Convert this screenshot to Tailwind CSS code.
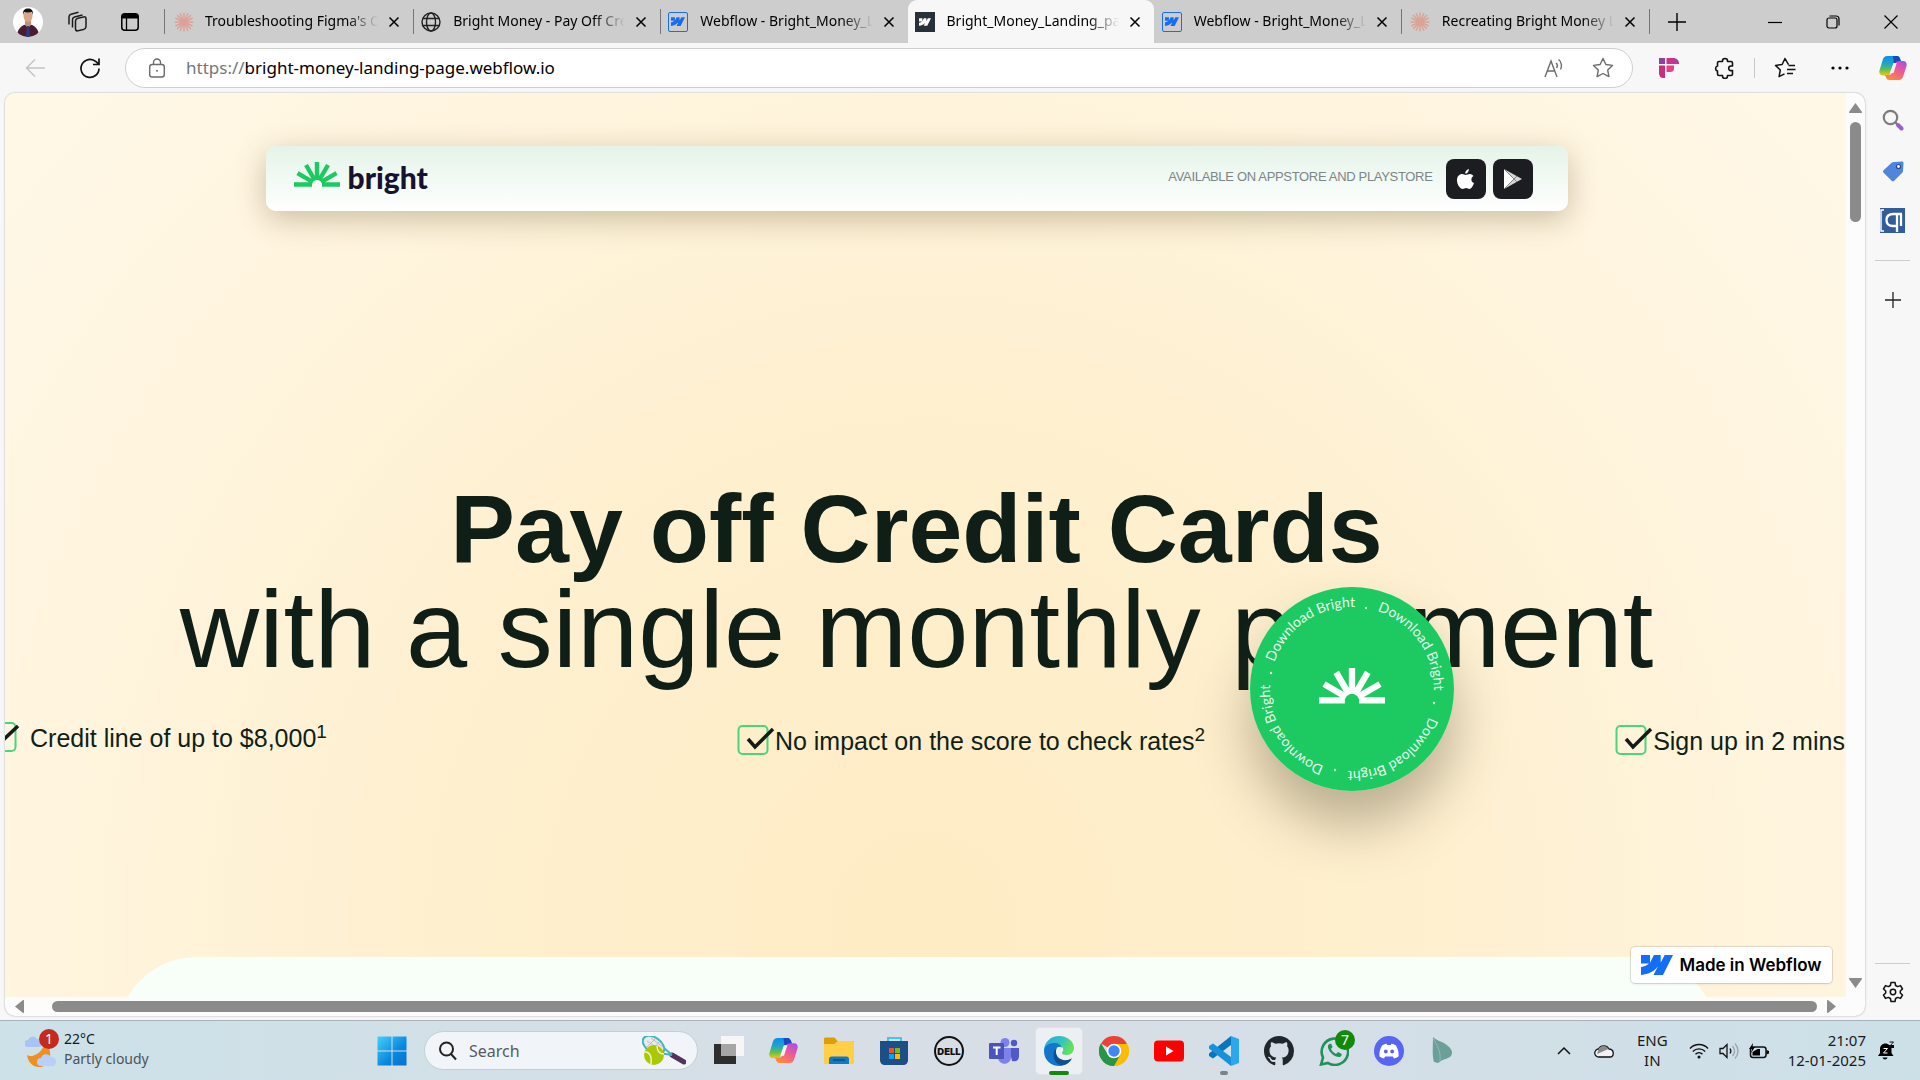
<!DOCTYPE html>
<html lang="en">
<head>
<meta charset="utf-8">
<title>Bright_Money_Landing_page</title>
<script src="https://cdn.jsdelivr.net/npm/@tailwindcss/browser@4"></script>
</head>
<body class="flex h-screen flex-col overflow-hidden bg-[#f7f7f7] font-['Noto_Sans',sans-serif] text-[#1a1a1a]">

<!-- shared symbols -->
<svg class="absolute size-0" aria-hidden="true">
  <symbol id="x" viewBox="0 0 12 12"><path d="M1.5 1.5l9 9M10.5 1.5l-9 9" stroke="currentColor" stroke-width="1.5" fill="none"/></symbol>
  <symbol id="burst" viewBox="0 0 20 20"><g stroke="#dca295" stroke-width="1.500" stroke-linecap="round"><path d="M10 1v18M1 10h18M3.5 3.5l13 13M16.500 3.500l-13 13M6.300 1.800l7.400 16.400M13.700 1.800L6.300 18.200M1.800 6.300l16.400 7.400M1.800 13.700l16.400-7.400"/></g></symbol>
  <symbol id="wf" viewBox="0 0 32 20"><path d="M32 0L22 20h-9.500l4.200-8.200h-.2C13 16.400 7.900 19.400 0 20v-8.100s5-.3 8-3.400H0V0h9v7.400h.2L12.900 0h6.800v7.300h.2L23.700 0z"/></symbol>
  <symbol id="sun" viewBox="0 0 46 25"><g stroke="currentColor" stroke-width="4.400" fill="none"><path d="M0 22.500h18M28 22.500h18M19 20.200L3.500 11.200M21 18.500L12 3M23 18V0M25 18.500L34 3M27 20.200l15.500-9"/></g></symbol>
  <symbol id="copilot" viewBox="0 0 30 28">
    <path d="M9 1h10c2.500 0 3.300 1.800 4 4l1 3h-5c-2.500 0-3.500 1.500-4.300 4l-2 6.500C12 21 10.500 22 8 22H4c-3 0-4.300-2.500-3.500-5.500L4 5c.8-2.600 2.200-4 5-4z" fill="url(#cpA)"/>
    <path d="M15 1h4c2.500 0 3.300 1.800 4 4l1 2.500h-3c-3 0-4 1-4.800 3.500z" fill="#1b46c4"/>
    <path d="M21 27H11c-2.500 0-3.300-1.800-4-4l-1-1.500h4c2.500 0 4-1.500 4.800-4l2.500-7.500C18.100 7.500 19.500 6.500 22 6.500h4c3 0 4.300 2.500 3.500 5.500L26 23c-.8 2.600-2.200 4-5 4z" fill="url(#cpB)"/>
    <path d="M15.500 8.500h3.500l-3.500 11h-4z" fill="#f6f2f4"/>
  </symbol>
  <defs>
    <linearGradient id="cpA" x1="0" y1="0" x2="0" y2="1"><stop offset="0" stop-color="#0a8df0"/><stop offset=".4" stop-color="#1ea6c8"/><stop offset=".7" stop-color="#5dc04f"/><stop offset="1" stop-color="#f5c518"/></linearGradient>
    <linearGradient id="cpB" x1="1" y1="0" x2="0.300" y2="1"><stop offset="0" stop-color="#a04df0"/><stop offset=".5" stop-color="#ee5a96"/><stop offset="1" stop-color="#ff8a3c"/></linearGradient>
  </defs>
</svg>

<!-- tab strip -->
<header class="flex h-[43px] shrink-0 items-center bg-[#cdcdcd] text-black">
  <div class="flex w-[164px] shrink-0 items-center pl-[13px]">
    <button aria-label="Profile" class="size-[30px] overflow-hidden rounded-full bg-white">
      <svg viewBox="0 0 30 30"><path d="M4 30c0-8 4-12 11-13 7 1 11 5 11 13z" fill="#4a1c34"/><path d="M12 13h6v5l-3 3-3-3z" fill="#c98f74"/><ellipse cx="15" cy="9" rx="4.500" ry="6" fill="#d9a58b"/><path d="M10 8c-.5-5 2-6.500 5-6.500S20.500 3 20 8l-1-3c-3 .5-6 .500-8 0z" fill="#171215"/><path d="M14 19h2l1 11h-4z" fill="#2b3d7a"/></svg>
    </button>
    <button aria-label="Workspaces" class="ml-[24px] size-[21px]"><svg viewBox="0 0 21 21" fill="none" stroke="#1a1a1a" stroke-width="1.500"><rect x="8.500" y="6.500" width="10.500" height="12.500" rx="2.500" transform="skewY(-14)" style="transform-origin:14px 12px"/><path d="M5.500 16.500V8.500c0-1.400.8-2.300 2-2.600l8-2"/><path d="M2 13.500V5.700c0-1.400.7-2.100 2-2.500l7.500-2"/></svg></button>
    <button aria-label="Tab actions" class="ml-[33px] size-[18px]"><svg viewBox="0 0 18 18"><rect x=".8" y=".8" width="16.400" height="16.400" rx="3" fill="none" stroke="#000" stroke-width="1.500"/><path d="M.5 5.500V3.500a3 3 0 013-3h11a3 3 0 013 3v2z"/><path d="M5.500 5v12.500" stroke="#000" stroke-width="1.300"/></svg></button>
  </div>
  <nav class="flex h-full min-w-0 max-w-[1486px] flex-1 items-center text-sm leading-5" aria-label="Tabs">
    <div class="flex h-[25px] min-w-0 flex-1 items-center border-l border-[#757575] pl-[9px] pr-[13px]"><svg class="size-[20px] shrink-0"><use href="#burst"/></svg><a href="#" class="ml-[11px] min-w-0 flex-1 overflow-hidden whitespace-nowrap pb-[2px] [mask-image:linear-gradient(to_right,#000_82%,transparent)]">Troubleshooting Figma's Co</a><button aria-label="Close tab" class="ml-[10px] size-[12px] shrink-0"><svg class="size-[12px]"><use href="#x"/></svg></button></div>
    <div class="flex h-[25px] min-w-0 flex-1 items-center border-l border-[#757575] pl-[7px] pr-[13px]"><svg class="size-[20px] shrink-0" viewBox="0 0 20 20" fill="none" stroke="#222" stroke-width="1.400"><circle cx="10" cy="10" r="9"/><ellipse cx="10" cy="10" rx="4.500" ry="9"/><path d="M1.800 6.500h16.400M1.800 13.500h16.400"/></svg><a href="#" class="ml-[12px] min-w-0 flex-1 overflow-hidden whitespace-nowrap pb-[2px] [mask-image:linear-gradient(to_right,#000_82%,transparent)]">Bright Money - Pay Off Credit</a><button aria-label="Close tab" class="ml-[10px] size-[12px] shrink-0"><svg class="size-[12px]"><use href="#x"/></svg></button></div>
    <div class="flex h-[25px] min-w-0 flex-1 items-center border-l border-[#757575] pl-[7px] pr-[13px]"><span class="flex size-[20px] shrink-0 items-center justify-center rounded-xs border border-[#146ef5]"><svg class="h-[9px] w-[14px] fill-[#146ef5]"><use href="#wf"/></svg></span><a href="#" class="ml-[12px] min-w-0 flex-1 overflow-hidden whitespace-nowrap pb-[2px] [mask-image:linear-gradient(to_right,#000_82%,transparent)]">Webflow - Bright_Money_La</a><button aria-label="Close tab" class="ml-[10px] size-[12px] shrink-0"><svg class="size-[12px]"><use href="#x"/></svg></button></div>
    <div class="flex h-full min-w-0 flex-1 items-center rounded-t-[9px] bg-[#f7f7f7] pl-[7px] pr-[13px]"><span class="flex size-[20px] shrink-0 items-center justify-center bg-[#28303a]"><svg class="h-[8px] w-[12px] fill-white"><use href="#wf"/></svg></span><a href="#" aria-current="page" class="ml-[12px] min-w-0 flex-1 overflow-hidden whitespace-nowrap pb-[2px] [mask-image:linear-gradient(to_right,#000_82%,transparent)]">Bright_Money_Landing_page</a><button aria-label="Close tab" class="ml-[10px] size-[12px] shrink-0"><svg class="size-[12px]"><use href="#x"/></svg></button></div>
    <div class="flex h-[25px] min-w-0 flex-1 items-center pl-[8px] pr-[13px]"><span class="flex size-[20px] shrink-0 items-center justify-center rounded-xs border border-[#146ef5]"><svg class="h-[9px] w-[14px] fill-[#146ef5]"><use href="#wf"/></svg></span><a href="#" class="ml-[12px] min-w-0 flex-1 overflow-hidden whitespace-nowrap pb-[2px] [mask-image:linear-gradient(to_right,#000_82%,transparent)]">Webflow - Bright_Money_La</a><button aria-label="Close tab" class="ml-[10px] size-[12px] shrink-0"><svg class="size-[12px]"><use href="#x"/></svg></button></div>
    <div class="flex h-[25px] min-w-0 flex-1 items-center border-x border-[#757575] pl-[8px] pr-[13px]"><svg class="size-[20px] shrink-0"><use href="#burst"/></svg><a href="#" class="ml-[12px] min-w-0 flex-1 overflow-hidden whitespace-nowrap pb-[2px] [mask-image:linear-gradient(to_right,#000_82%,transparent)]">Recreating Bright Money La</a><button aria-label="Close tab" class="ml-[10px] size-[12px] shrink-0"><svg class="size-[12px]"><use href="#x"/></svg></button></div>
  </nav>
  <button aria-label="New tab" class="ml-[18px] size-[18px] shrink-0"><svg viewBox="0 0 18 18" stroke="#000" stroke-width="1.400"><path d="M9 0v18M0 9h18"/></svg></button>
  <div class="ml-auto flex items-center gap-[44px] pr-[22px]">
    <button aria-label="Minimize" class="size-[14px]"><svg viewBox="0 0 14 14" stroke="#000" stroke-width="1.200"><path d="M0 7.500h14"/></svg></button>
    <button aria-label="Restore" class="size-[14px]"><svg viewBox="0 0 14 14" stroke="#000" stroke-width="1.200" fill="none"><rect x="1" y="3" width="10" height="10" rx="2"/><path d="M3.500 1h6.500a3 3 0 013 3v6.500"/></svg></button>
    <button aria-label="Close" class="size-[14px]"><svg viewBox="0 0 14 14" stroke="#000" stroke-width="1.200"><path d="M.5.5l13 13M13.500.5l-13 13"/></svg></button>
  </div>
</header>

<!-- toolbar -->
<div class="flex h-[50px] shrink-0 items-center">
  <button aria-label="Back" class="ml-[25px] size-[20px]"><svg viewBox="0 0 20 20" fill="none" stroke="#c4c4c4" stroke-width="1.500"><path d="M10 1.500L1.500 10l8.500 8.500M1.500 10H20"/></svg></button>
  <button aria-label="Refresh" class="ml-[34px] size-[22px]"><svg viewBox="0 0 22 22" fill="none" stroke="#111" stroke-width="1.700"><path d="M20 11.500a9 9 0 11-3-6.800l2.500 2.200M20 1.500v6h-6"/></svg></button>
  <div class="ml-[24px] flex h-[40px] min-w-0 flex-1 items-center rounded-full border border-[#cfcfcf] bg-white">
    <svg class="ml-[21px] size-[20px] shrink-0" viewBox="0 0 20 20" fill="none" stroke="#6b6b6b" stroke-width="1.400"><rect x="2.700" y="6.500" width="14.600" height="12.500" rx="2.500"/><path d="M6.500 6.500V4.500a3.500 3.500 0 017 0v2"/><circle cx="10" cy="12.800" r="1" fill="#6b6b6b" stroke="none"/></svg>
    <label for="url" class="ml-[19px] text-[17px] leading-6 text-[#767676]">https://</label><input id="url" value="bright-money-landing-page.webflow.io" class="min-w-0 flex-1 bg-transparent text-[17px] leading-6 text-black outline-none">
    <button aria-label="Read aloud" class="size-[20px]"><svg viewBox="0 0 20 20" fill="none" stroke="#6b6b6b" stroke-width="1.400"><path d="M1 19L7 3l6 16M3.200 13h7.600M12 5c1.500 1.300 1.500 3.500.5 5M14.500 1.500c3.500 2.500 3.500 7 2 10"/></svg></button>
    <button aria-label="Add to favorites" class="ml-[28px] mr-[18px] size-[22px]"><svg viewBox="0 0 22 22" fill="none" stroke="#6b6b6b" stroke-width="1.400" stroke-linejoin="round"><path d="M11 1.500l2.900 6 6.600.9-4.800 4.600 1.200 6.600L11 16.500l-5.900 3.100L6.300 13 1.500 8.400l6.600-.9z"/></svg></button>
  </div>
  <button aria-label="Extension" class="ml-[26px] size-[20px]"><svg viewBox="0 0 20 20"><path d="M0 0h6v6H0z" fill="#8e3fa0"/><path d="M7.500 0H14c4 0 6 2.500 6 6H7.500z" fill="#c63390"/><path d="M0 7.500h6V20H4.500C1.500 20 0 18 0 15z" fill="#c2307e"/><path d="M7.500 7.500h7.500V10c0 2.500-1 4-4 4H7.500z" fill="#e93f82"/></svg></button>
  <button aria-label="Extensions" class="ml-[35px] size-[22px]"><svg viewBox="0 0 22 22" fill="none" stroke="#111" stroke-width="1.600" stroke-linejoin="round"><path d="M5 4.500h3.500V4a2.500 2.500 0 015 0v.5H17a1.500 1.500 0 011.500 1.500v3H17a2.300 2.300 0 000 4.600h1.500V17a1.500 1.500 0 01-1.500 1.500h-3.500V19a2.500 2.500 0 01-5 0v-.5H5A1.500 1.500 0 013.500 17v-3a2.600 2.600 0 010-5V6A1.500 1.500 0 015 4.500z"/></svg></button>
  <span class="ml-[18px] h-[20px] w-px bg-[#c8c8c8]"></span>
  <button aria-label="Favorites" class="ml-[19px] size-[22px]"><svg viewBox="0 0 22 22" fill="none" stroke="#111" stroke-width="1.500" stroke-linejoin="round"><path d="M14.500 7.600l-3.500-6.100-2.900 6-6.600.9L6.300 13l-1.200 6.600 5.400-2.800M14.500 8.500H21M13 12.500h8.500M13 16.500h6"/></svg></button>
  <button aria-label="More" class="ml-[34px] size-[20px]"><svg viewBox="0 0 20 20"><circle cx="3" cy="10" r="1.600"/><circle cx="10" cy="10" r="1.600"/><circle cx="17" cy="10" r="1.600"/></svg></button>
  <button aria-label="Copilot" class="ml-[29px] mr-[13px] h-[26px] w-[28px]"><svg class="h-[26px] w-[28px]"><use href="#copilot"/></svg></button>
</div>

<div class="flex min-h-0 flex-1 pb-[4px]">
  <!-- web page -->
  <main class="ml-[5px] flex min-w-0 flex-1 flex-col overflow-hidden rounded-[10px] bg-[#fcfcfc] shadow-[0_0_2px_rgba(0,0,0,0.35)]">
    <div class="flex min-h-0 flex-1">
      <div class="relative min-w-0 flex-1 overflow-hidden bg-[radial-gradient(ellipse_58%_120%_at_50%_92%,#feecc4_0%,#fef0d0_50%,#fff5df_85%,#fff8e7_110%)] font-['Liberation_Sans',Arial,sans-serif] text-[#0f1f17]">
        <div class="flex h-full flex-col pr-[18px]">
          <header class="mx-auto mt-[53px] flex h-[65px] w-[1302px] max-w-full shrink-0 items-center rounded-[10px] bg-linear-to-b from-[#e4f4e8] to-white pl-[28px] pr-[35px] shadow-[0_8px_30px_rgba(80,60,20,0.3)]">
            <a href="#" class="flex items-center gap-[8px] pb-[4px] text-[#1dca62]" aria-label="bright"><svg class="mb-[4px] h-[25px] w-[46px]"><use href="#sun"/></svg><span class="font-['Lato',sans-serif] text-[30px] font-black leading-8 text-[#15132f]">bright</span></a>
            <span class="ml-auto pb-[3px] text-[13px] leading-5 tracking-tight text-[#7c8588]">AVAILABLE ON APPSTORE AND PLAYSTORE</span>
            <button aria-label="App Store" class="ml-[13px] flex size-[40px] items-center justify-center rounded-lg bg-[#1c1d21]"><svg class="h-[20px] w-[17px]" viewBox="0 0 17 20" fill="#fff"><path d="M11.800 0c.2 1.500-.4 2.600-1.100 3.400-.7.800-1.600 1.300-2.500 1.200C8 3.300 8.600 2.200 9.400 1.400 10.100.6 11 .2 11.800 0zM16.500 7c-1.500.9-2.100 2-2.100 3.400 0 1.700 1 2.900 2.600 3.500-.8 2.500-2.700 6-4.600 6-1.300 0-1.900-.8-3.300-.8-1.500 0-2.100.8-3.300.8C3 19.900 0 15.500 0 11.200 0 7.300 2.500 5 5.100 5c1.500 0 2.600.9 3.600.9 1.100 0 2.300-1 4-1 1.500 0 2.900.7 3.800 2.100z"/></svg></button>
            <button aria-label="Play Store" class="ml-[7px] flex size-[40px] items-center justify-center rounded-lg bg-[#1c1d21]"><svg class="h-[20px] w-[18px]" viewBox="0 0 18 20"><path d="M0 0l18 10L0 20z" fill="#d6d6d6"/><path d="M0 0l9.500 10L0 20z" fill="#fff"/><path d="M0 0l13 13M0 20L13 7" stroke="#7c7c7c" stroke-width=".9"/></svg></button>
          </header>
          <h1 class="mt-[268px] shrink-0 whitespace-nowrap text-center"><span class="flex justify-center text-[97px] font-bold leading-[100px]">Pay off Credit Cards</span><span class="flex justify-center text-[110px] leading-[100px]">with a single monthly payment</span></h1>
          <ul class="-ml-[22px] mt-[41px] flex shrink-0 items-start gap-[410px] whitespace-nowrap text-[25px] leading-[36px] text-[#0f1f17]">
            <li class="flex shrink-0 gap-[8px]"><svg class="mt-[1px] h-[32px] w-[39px]" viewBox="0 0 39 32" fill="none"><rect x="4.500" y="2" width="28" height="28" rx="4" stroke="#48d67c" stroke-width="2"/><path d="M11 16l6 6L35 5" stroke="#151c18" stroke-width="3.500"/></svg><span>Credit line of up to $8,000<sup class="text-[19px]">1</sup></span></li>
            <li class="flex shrink-0 pt-[3px]"><svg class="mt-[1px] h-[32px] w-[38px]" viewBox="0 0 38 32" fill="none"><rect x="1.500" y="2" width="29" height="28" rx="4" stroke="#48d67c" stroke-width="2"/><path d="M11 15l7 8L36 5" stroke="#151c18" stroke-width="3.500"/></svg><span>No impact on the score to check rates<sup class="text-[19px]">2</sup></span></li>
            <li class="flex shrink-0 pt-[3px]"><svg class="mt-[1px] h-[32px] w-[38px]" viewBox="0 0 38 32" fill="none"><rect x="1.500" y="2" width="29" height="28" rx="4" stroke="#48d67c" stroke-width="2"/><path d="M11 15l7 8L36 5" stroke="#151c18" stroke-width="3.500"/></svg><span>Sign up in 2 mins</span></li>
          </ul>
          <section class="mx-auto mt-auto h-[40px] w-[1600px] shrink-0 overflow-hidden"><div class="h-[160px] rounded-[80px] bg-[#f7fff8]"></div></section>
        </div>
        <!-- download badge floating over the hero -->
        <a href="#" aria-label="Download Bright" class="absolute left-[1245px] top-[494px] size-[204px] rounded-full shadow-[0_34px_54px_rgba(70,60,40,0.36)]">
          <svg viewBox="0 0 204 204" class="size-[204px]">
            <defs><path id="ring" d="M102 20a82 82 0 010 164a82 82 0 010-164"/></defs>
            <circle cx="102" cy="102" r="102" fill="#1dca62"/>
            <g fill="#e6fbee" font-family="Lato, sans-serif" font-size="14">
              <text transform="rotate(18 102 102)"><textPath href="#ring">Download Bright</textPath></text>
              <text transform="rotate(110 102 102)"><textPath href="#ring">Download Bright</textPath></text>
              <text transform="rotate(200 102 102)"><textPath href="#ring">Download Bright</textPath></text>
              <text transform="rotate(289 102 102)"><textPath href="#ring">Download Bright</textPath></text>
              <circle cx="116" cy="21" r="1.200"/><circle cx="184" cy="116" r="1.200"/><circle cx="85" cy="183" r="1.200"/><circle cx="21" cy="86" r="1.200"/>
            </g>
            <svg x="69" y="81" width="66" height="36" class="text-white"><use href="#sun"/></svg>
          </svg>
        </a>
        <a href="#" class="absolute bottom-[14px] right-[14px] flex h-[36px] w-[201px] items-center justify-center gap-[6px] rounded-[4px] bg-white font-['Inter',sans-serif] text-[17px] font-semibold leading-5 text-black shadow-[0_0_0_1px_rgba(0,0,0,0.1),0_1px_3px_rgba(0,0,0,0.1)]"><svg class="h-[20px] w-[32px] fill-[#146ef5]"><use href="#wf"/></svg><span class="whitespace-nowrap">Made in Webflow</span></a>
      </div>
      <div class="flex w-[19px] shrink-0 flex-col items-center pb-[9px] pt-[10px]" aria-hidden="true">
        <svg class="h-[10px] w-[13px] fill-[#8b8b8b]" viewBox="0 0 13 10"><path d="M6.500 0L13 9c0 .600-.4 1-1 1H1c-.6 0-1-.4-1-1z"/></svg>
        <span class="mt-[9px] h-[100px] w-[11px] rounded-full bg-[#8b8b8b]"></span>
        <svg class="mt-auto h-[10px] w-[13px] fill-[#8b8b8b]" viewBox="0 0 13 10"><path d="M6.500 10L0 1c0-.600.4-1 1-1h11c.6 0 1 .4 1 1z"/></svg>
      </div>
    </div>
    <div class="flex h-[19px] shrink-0 items-center pl-[10px] pr-[29px]" aria-hidden="true">
      <svg class="h-[13px] w-[9px] fill-[#8b8b8b]" viewBox="0 0 9 13"><path d="M0 6.500L8 0c.6 0 1 .4 1 1v11c0 .600-.4 1-1 1z"/></svg>
      <span class="ml-[28px] mr-[10px] h-[11px] flex-1 rounded-full bg-[#8b8b8b]"></span>
      <svg class="h-[13px] w-[9px] fill-[#8b8b8b]" viewBox="0 0 9 13"><path d="M9 6.500L1 13c-.6 0-1-.4-1-1V1c0-.600.4-1 1-1z"/></svg>
    </div>
  </main>
  <!-- side bar -->
  <aside class="flex w-[55px] shrink-0 flex-col items-center pb-[13px] pt-[16px]">
    <button aria-label="Search" class="size-[22px]"><svg viewBox="0 0 22 22" fill="none"><circle cx="8.500" cy="8.500" r="6.700" stroke="#7d7d7d" stroke-width="2.200"/><path d="M13.500 13.500l2 2" stroke="#777" stroke-width="2"/><path d="M16 16l3.500 3.500" stroke="#9a5fd0" stroke-width="4" stroke-linecap="round"/></svg></button>
    <button aria-label="Shopping" class="mt-[29px] size-[22px]"><svg viewBox="0 0 22 22"><path d="M12 2l8-.5c1 0 1.500.5 1.500 1.500L21 11c0 .7-.3 1.200-.8 1.700l-8 8c-.8.800-1.800.800-2.600 0l-8-8c-.8-.8-.8-1.700 0-2.500l8-7.400C10.500 2.200 11.200 2 12 2z" fill="#4f86dc"/><circle cx="16.500" cy="6.500" r="2" fill="#fff" stroke="#234a9c" stroke-width="1.200"/></svg></button>
    <button aria-label="Reader" class="mt-[26px] size-[25px] bg-[#325d9b]"><svg viewBox="0 0 25 25" fill="none" stroke="#fff"><path d="M22 6h-8.500c-5.500 0-7 3-7 6s1.500 6 6.500 6h3M17 6v18M21 6v12" stroke-width="2.300"/><path d="M4 2H1v21h3" stroke-width="1.500"/></svg></button>
    <span class="mt-[27px] h-px w-[35px] bg-[#cdcdcd]"></span>
    <button aria-label="Customize" class="mt-[31px] size-[16px]"><svg viewBox="0 0 16 16" stroke="#222" stroke-width="1.300"><path d="M8 0v16M0 8h16"/></svg></button>
    <span class="mt-auto h-px w-[35px] bg-[#cdcdcd]"></span>
    <button aria-label="Settings" class="mt-[17px] size-[22px]"><svg viewBox="0 0 22 22" fill="none" stroke="#111" stroke-width="1.500" stroke-linejoin="round"><path d="M9 1.500h4l.6 3 2 1.100 2.900-1 2 3.400-2.200 2v2l2.200 2-2 3.400-2.900-1-2 1.100-.6 3H9l-.6-3-2-1.100-2.900 1-2-3.400 2.200-2v-2l-2.200-2 2-3.400 2.900 1 2-1.100z"/><circle cx="11" cy="11" r="2.700"/></svg></button>
  </aside>
</div>

<!-- taskbar -->
<footer class="flex h-[60px] shrink-0 items-center border-t border-[#a7b3b9] bg-linear-to-r from-[#cce1e8] via-[#d9dee6] via-[52%] to-[#cce0e8] text-[15px]">
  <div class="flex w-[377px] shrink-0 items-center pl-[25px]">
    <div class="relative h-[36px] w-[32px]"><svg viewBox="0 0 32 36"><path d="M2 22c4 3 14 0 18-12 8 6 7 22-4 24-8 1-13-5-14-12z" fill="#ee8f22"/><path d="M3 14a3.500 3.500 0 010-7 5 5 0 019-1c4 0 5 2 5 4s-1 4-4 4z" fill="#a8c4f4"/><path d="M16 33a4 4 0 010-8 5.500 5.500 0 0110-1c4 0 5 2.500 5 4.500S30 33 27 33z" fill="#b9cffa"/></svg><span class="absolute -top-[4px] left-[14px] flex size-[20px] items-center justify-center rounded-full bg-[#c42b1c] text-sm leading-5 text-white">1</span></div>
    <div class="ml-[7px] pb-[3px] text-sm leading-[20px]"><p>22°C</p><p class="text-[#4b5358]">Partly cloudy</p></div>
  </div>
  <button aria-label="Start" class="size-[30px] shrink-0"><svg viewBox="0 0 30 30"><defs><linearGradient id="win" x1="0" y1="0" x2="1" y2="1" gradientUnits="objectBoundingBox"><stop offset="0" stop-color="#45d0fb"/><stop offset=".6" stop-color="#0a86de"/><stop offset="1" stop-color="#0671cc"/></linearGradient></defs><path d="M.5.5h14v14H.5zM15.500.5h14v14h-14zM.5 15.500h14v14H.5zM15.500 15.500h14v14h-14z" fill="url(#win)"/></svg></button>
  <label class="ml-[17px] flex h-[39px] w-[274px] shrink-0 items-center rounded-full border border-[#c3ced5] bg-[#f1f5f9] pl-[13px] pr-[11px]">
    <svg class="size-[20px] shrink-0" viewBox="0 0 20 20" fill="none" stroke="#222" stroke-width="2"><circle cx="8.500" cy="8" r="6.500"/><path d="M13 13l5 5.500"/></svg>
    <input placeholder="Search" aria-label="Search" class="ml-[11px] min-w-0 flex-1 bg-transparent text-[16px] leading-6 outline-none placeholder:text-[#575b60]">
    <svg class="h-[30px] w-[44px] shrink-0" viewBox="0 0 44 30"><path d="M30 19l12 7" stroke="#55325e" stroke-width="5" stroke-linecap="round"/><path d="M22 12l8 7M17 17l13 2" stroke="#48b3b9" stroke-width="2"/><ellipse cx="11.500" cy="9" rx="12" ry="7.500" transform="rotate(35 11.500 9)" fill="#e7e9ec" stroke="#48b3b9" stroke-width="2"/><path d="M5 5l16 11M9 2l12 9M4 12l10-10M10 15L18 5" stroke="#aaa" stroke-width=".7"/><circle cx="12" cy="19" r="10" fill="#aac806"/><path d="M3 16c4 0 7 3 6 12M15 10c0 5 3 8 7 8" stroke="#f2f8c4" stroke-width="1.500" fill="none"/></svg>
  </label>
  <div class="ml-[16px] flex shrink-0 items-center gap-[25px] [&>button]:size-[30px] [&>button]:shrink-0">
    <button aria-label="Task view"><svg viewBox="0 0 30 30"><path d="M0 8h22v20H0z" fill="#2e2e2e"/><path d="M7 0h23v20H7z" fill="#f6f6f6"/><path d="M7 8h15v12H7z" fill="#a6a6a6"/></svg></button>
    <button aria-label="Copilot"><svg class="size-[29px]"><use href="#copilot"/></svg></button>
    <button aria-label="File Explorer"><svg viewBox="0 0 30 30"><path d="M0 3c0-1 .5-1.500 1.500-1.500h9l3 3.500H30v8H0z" fill="#dd9d0c"/><path d="M0 8h10l4-3h14.500c1 0 1.500.5 1.500 1.500V28H0z" fill="#ffcf48"/><path d="M5 28v-5c0-1.500 1-2.500 2.500-2.500h15c1.500 0 2.500 1 2.500 2.500v5z" fill="#1279c4"/><path d="M9 24h12" stroke="#0a4d86" stroke-width="1.500"/></svg></button>
    <button aria-label="Microsoft Store"><svg viewBox="0 0 30 30"><path d="M9 7V2h13v5" fill="none" stroke="#3fc6f5" stroke-width="2"/><path d="M1 5h28v19c0 3-2 5-5 5H6c-3 0-5-2-5-5z" fill="#1c4f86"/><path d="M10 12h5v5h-5z" fill="#f25022"/><path d="M16 12h5v5h-5z" fill="#7fba00"/><path d="M10 18h5v5h-5z" fill="#00a4ef"/><path d="M16 18h5v5h-5z" fill="#ffb900"/></svg></button>
    <button aria-label="Dell"><svg viewBox="0 0 30 30"><circle cx="15" cy="15" r="14" fill="none" stroke="#111" stroke-width="2"/><text x="15" y="18.500" text-anchor="middle" font-family="Inter, sans-serif" font-weight="900" font-size="9.500" fill="#111">DELL</text></svg></button>
    <button aria-label="Teams"><svg viewBox="0 0 30 30"><circle cx="25" cy="7" r="3.200" fill="#5059c9"/><path d="M20 12h10v8c0 5-4 6-7 5z" fill="#5059c9"/><circle cx="16" cy="6.500" r="4.500" fill="#7b83eb"/><path d="M9 12h13v9c0 9-13 9-13 0z" fill="#7b83eb"/><rect y="7" width="15" height="16" rx="1" fill="#4b53bc"/><path d="M4 11.500h7.500M7.700 11.500V19" stroke="#fff" stroke-width="2"/></svg></button>
    <button aria-label="Microsoft Edge" class="relative"><span class="absolute -left-[9px] -top-[9px] h-[48px] w-[48px] rounded-[5px] border border-[#dfe3e8] bg-[#edf0f3]"></span><span class="absolute -bottom-[9px] left-[5px] h-[4px] w-[20px] rounded-full bg-[#118a0c]"></span><svg viewBox="0 0 30 30" class="relative"><defs><linearGradient id="eg" x1="0" y1="0" x2="1" y2=".3"><stop offset="0" stop-color="#2aa5e0"/><stop offset=".6" stop-color="#2fc4c0"/><stop offset="1" stop-color="#66e05a"/></linearGradient></defs><path d="M0 15C0 6 7 0 15 0c9 0 15 6 15 12 0 4-3 7-7 7-3 0-5-1-5-2s2-2 1-5c-1-3-4-4-7-4C6 8 1 11 0 15z" fill="url(#eg)"/><path d="M0 15c0-5 5-8 10-8 4.500 0 7.500 2 8.500 5-2-2-5-1.500-6.500 1-2 4 0 8 4 10 3 2 8 2 12-1-2 4-7 8-12.500 8C7 30 0 24 0 15z" fill="#1277cc"/><path d="M9.500 19c0-4 1.500-6 3.500-7-2 3-1 8 2.500 10.500 4 2.500 8 2 12 .5-2 4-7 7-11 6-4-1-7-5-7-10z" fill="#0d4f94"/></svg></button>
    <button aria-label="Chrome"><svg viewBox="0 0 30 30"><path d="M15 15L2 7.500A15 15 0 0128 7.500z" fill="#ea4335"/><path d="M15 15h0L28 7.500A15 15 0 0115 30z" fill="#fbbc04"/><path d="M15 15v15A15 15 0 012 7.500l6.500 11z" fill="#299447"/><path d="M15 8h13.200A15 15 0 0115 30l6.500-11z" fill="#fbbc04"/><path d="M2 7.500A15 15 0 0015 30l6.300-11.300H9z" fill="#299447"/><circle cx="15" cy="15" r="7.300" fill="#fff"/><circle cx="15" cy="15" r="5.700" fill="#4285f4"/></svg></button>
    <button aria-label="YouTube"><svg viewBox="0 0 30 30"><rect y="4.500" width="30" height="21" rx="4" fill="#f00"/><path d="M12 10.500l7.500 4.500-7.500 4.500z" fill="#fff"/></svg></button>
    <button aria-label="Visual Studio Code" class="relative"><svg viewBox="0 0 30 30"><path d="M22 0l8 3v24l-8 3z" fill="#2aa8ee"/><path d="M22 0v9L4 22.500 0 20v-2.500z" fill="#0a74bd"/><path d="M22 30v-9L4 7.500 0 10v2.500z" fill="#1592d8"/></svg><span class="absolute -bottom-[9px] left-[11px] h-[4px] w-[8px] rounded-full bg-[#7b8288]"></span></button>
    <button aria-label="GitHub"><svg viewBox="0 0 16 16" fill="#1f262c"><path d="M8 0C3.580 0 0 3.580 0 8c0 3.540 2.290 6.530 5.470 7.590.4.070.55-.17.55-.38 0-.19-.01-.82-.01-1.490-2.010.37-2.530-.49-2.690-.94-.09-.23-.48-.94-.82-1.130-.28-.15-.68-.52-.01-.53.63-.01 1.080.58 1.230.82.72 1.210 1.870.87 2.330.66.070-.52.280-.87.510-1.070-1.780-.2-3.640-.89-3.640-3.950 0-.87.310-1.590.820-2.150-.080-.2-.36-1.020.080-2.120 0 0 .67-.21 2.200.82.640-.18 1.320-.27 2-.27s1.360.09 2 .27c1.530-1.040 2.200-.82 2.200-.82.440 1.100.160 1.920.080 2.120.510.560.820 1.270.820 2.150 0 3.070-1.870 3.750-3.650 3.950.290.250.540.730.540 1.480 0 1.070-.010 1.930-.010 2.200 0 .210.150.460.550.380A8.010 8.010 0 0016 8c0-4.420-3.580-8-8-8z"/></svg></button>
    <button aria-label="WhatsApp" class="relative"><svg viewBox="0 0 30 30" fill="none" stroke="#20915a" stroke-width="2.600"><path d="M2 28.500l2-7A13.200 13.200 0 119 27z"/><path d="M9 9.500c-1 5 6 12 12 11.500 2-1 2-3 1-3.500l-3-1.500-2 2c-2-1-4-3-5-5l1.500-2-1.200-3c-.8-.8-2.500-.2-3.300 1.500z" fill="#20915a" stroke="none"/></svg><span class="absolute -right-[6px] -top-[6px] flex size-[20px] items-center justify-center rounded-full bg-[#118a0c] text-sm leading-5 text-white">7</span></button>
    <button aria-label="Discord"><svg viewBox="0 0 30 30"><circle cx="15" cy="15" r="15" fill="#5865f2"/><path d="M8 9.500c1.500-1 3-1.500 4.500-1.700l.7 1.200h3.600l.7-1.200c1.500.2 3 .7 4.500 1.700 2 3.500 3 7 2.500 11-1.500 1-3 1.600-4.500 2l-1.200-2h-7.600l-1.200 2c-1.500-.4-3-1-4.500-2-.5-4 .5-7.500 2.500-11z" fill="#fff"/><circle cx="11.800" cy="15.500" r="1.900" fill="#5865f2"/><circle cx="18.200" cy="15.500" r="1.900" fill="#5865f2"/></svg></button>
    <button aria-label="Leaf"><svg viewBox="0 0 30 30"><path d="M4 1c5 5 10 4 15 9 4 3 5 7 3 10-3 3-7 3-10 5l-3 2-4-1C3 20 4 10 4 1z" fill="#6d9f99"/><path d="M4 2c4 8 8 12 7 23" stroke="#8fbab4" fill="none"/></svg></button>
  </div>
  <div class="ml-auto flex shrink-0 items-center pr-[26px]">
    <button aria-label="Show hidden icons" class="size-[14px]"><svg viewBox="0 0 14 14" fill="none" stroke="#111" stroke-width="1.500"><path d="M1 10l6-6 6 6"/></svg></button>
    <svg class="ml-[23px] h-[14px] w-[20px]" viewBox="0 0 20 14"><path d="M5 13a4 4 0 01-.500-8A6 6 0 0115 5c6 .5 5 8 1 8z" fill="#f2f2f2" stroke="#111" stroke-width="1.300"/><path d="M4.500 5.500A5.500 5.500 0 0114.500 5L11 6.500 3 10z" fill="#8a8a8a"/></svg>
    <div class="ml-[23px] pb-[2px] text-center text-[15px] leading-[20px]"><p>ENG</p><p>IN</p></div>
    <svg class="ml-[21px] h-[16px] w-[20px]" viewBox="0 0 20 16" fill="none" stroke="#111" stroke-width="1.400"><path d="M1 5.500c5-5.300 13-5.300 18 0M3.800 8.500c3.500-3.500 9-3.500 12.400 0M6.500 11.300c2-2 5-2 7 0"/><circle cx="10" cy="14" r="1.500" fill="#111" stroke="none"/></svg>
    <svg class="ml-[10px] h-[18px] w-[20px]" viewBox="0 0 20 18" fill="none" stroke="#111" stroke-width="1.300"><path d="M1 6.500h3L8 2.500v13L4 11.500H1z"/><path d="M11 6.500c1 1.500 1 3.500 0 5"/><path d="M13.500 4c2.500 3 2.500 7 0 10M16 1.500c4 4.500 4 10.500 0 15" stroke="#9aa6ac"/></svg>
    <svg class="ml-[10px] h-[16px] w-[20px]" viewBox="0 0 20 16"><rect x="1.500" y="4" width="15.500" height="10.500" rx="2.500" fill="none" stroke="#111" stroke-width="1.500"/><path d="M3.500 12.500V9l5-3h2.500v6.500zM17.500 7l2.500 1v2.500l-2.500 1z"/><path d="M4 0L0 6h3l-1 4 4-6H3.500z"/></svg>
    <div class="ml-[19px] pb-[2px] text-right text-[15px] leading-[20px]"><p>21:07</p><p>12-01-2025</p></div>
    <svg class="ml-[11px] h-[20px] w-[17px]" viewBox="0 0 17 20"><path d="M1 15l2-3V8c0-3 2-5.500 5.500-5.500 1.500 0 2.500.5 3.500 1.500h5V7h-2.500v5l2 3z"/><path d="M5.500 16.500h5c-.5 2.500-4.500 2.500-5 0z"/><path d="M6.500 7.500h4l-4 4.500h4" stroke="#fff" fill="none"/><path d="M12.500 1h4l-4 4.500h4" stroke="#111" fill="none"/></svg>
  </div>
</footer>
</body>
</html>
